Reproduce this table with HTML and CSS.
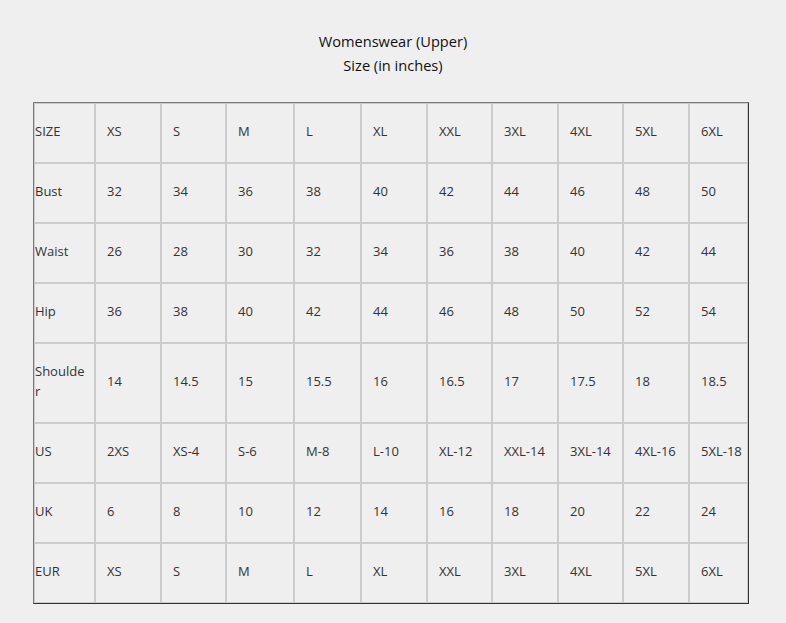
FILE: index.html
```html
<!DOCTYPE html>
<html lang="en">
<head>
<meta charset="utf-8">
<title>Womenswear (Upper) Size Chart</title>
<link rel="stylesheet" href="styles.css">
</head>
<body>
<div class="chart">
  <div class="chart-title">
    <div>Womenswear (Upper)</div>
    <div>Size (in inches)</div>
  </div>
  <table class="size-table">
    <tbody>
      <tr><td>SIZE</td><td>XS</td><td>S</td><td>M</td><td>L</td><td>XL</td><td>XXL</td><td>3XL</td><td>4XL</td><td>5XL</td><td>6XL</td></tr>
      <tr><td>Bust</td><td>32</td><td>34</td><td>36</td><td>38</td><td>40</td><td>42</td><td>44</td><td>46</td><td>48</td><td>50</td></tr>
      <tr><td>Waist</td><td>26</td><td>28</td><td>30</td><td>32</td><td>34</td><td>36</td><td>38</td><td>40</td><td>42</td><td>44</td></tr>
      <tr><td>Hip</td><td>36</td><td>38</td><td>40</td><td>42</td><td>44</td><td>46</td><td>48</td><td>50</td><td>52</td><td>54</td></tr>
      <tr><td>Shoulder</td><td>14</td><td>14.5</td><td>15</td><td>15.5</td><td>16</td><td>16.5</td><td>17</td><td>17.5</td><td>18</td><td>18.5</td></tr>
      <tr><td>US</td><td>2XS</td><td>XS-4</td><td>S-6</td><td>M-8</td><td>L-10</td><td>XL-12</td><td>XXL-14</td><td>3XL-14</td><td>4XL-16</td><td>5XL-18</td></tr>
      <tr><td>UK</td><td>6</td><td>8</td><td>10</td><td>12</td><td>14</td><td>16</td><td>18</td><td>20</td><td>22</td><td>24</td></tr>
      <tr><td>EUR</td><td>XS</td><td>S</td><td>M</td><td>L</td><td>XL</td><td>XXL</td><td>3XL</td><td>4XL</td><td>5XL</td><td>6XL</td></tr>
    </tbody>
  </table>
</div>
</body>
</html>
```
FILE: styles.css
```css
html, body {
  margin: 0;
  padding: 0;
  background: #efefef;
}

body {
  font-family: "Open Sans", "Noto Sans", "DejaVu Sans", sans-serif;
  color: #333;
}

.chart {
  padding-top: 29px;
}

.chart-title {
  text-align: center;
  font-size: 14.6px;
  line-height: 24px;
  color: #111;
  margin-bottom: 25px;
}

.size-table {
  margin-left: 33px;
  width: 716px;
  table-layout: fixed;
  border-collapse: separate;
  border-spacing: 0;
  border-width: 1px;
  border-style: solid;
  border-color: #7a7a7a #333 #333 #7a7a7a;
  box-sizing: border-box;
  font-size: 13px;
  line-height: 20px;
}

.size-table td {
  box-sizing: border-box;
  border: 1px solid #cccccc;
  padding: 17px 3px 21px 11px;
  vertical-align: middle;
  text-align: left;
  overflow-wrap: anywhere;
  word-break: break-all;
}

.size-table td:nth-child(1) { width: 61px; padding-left: 0; padding-right: 6px; }
.size-table td:nth-child(2) { width: 66px; }
.size-table td:nth-child(3) { width: 65px; }
.size-table td:nth-child(4) { width: 68px; }
.size-table td:nth-child(5) { width: 67px; }
.size-table td:nth-child(6) { width: 66px; }
.size-table td:nth-child(7) { width: 65px; }
.size-table td:nth-child(8) { width: 66px; }
.size-table td:nth-child(9) { width: 65px; }
.size-table td:nth-child(10) { width: 66px; }
.size-table td:nth-child(11) { width: 59px; }
```
